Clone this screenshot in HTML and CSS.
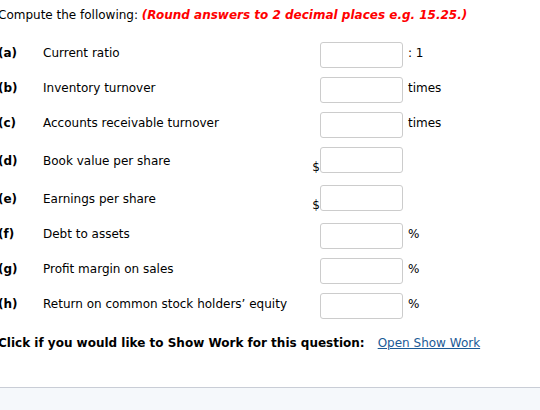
FILE: index.html
```html
<!DOCTYPE html>
<html>
<head>
<meta charset="utf-8">
<link rel="stylesheet" href="styles.css">
</head>
<body>
<div class="page">
  <p class="intro">Compute the following: <span class="note">(Round answers to 2 decimal places e.g. 15.25.)</span></p>
  <div class="rows">
    <div class="row"><span class="letter">(a)</span><span class="label">Current ratio</span><span class="prefix"></span><input class="field" type="text"><span class="unit">: 1</span></div>
    <div class="row"><span class="letter">(b)</span><span class="label">Inventory turnover</span><span class="prefix"></span><input class="field" type="text"><span class="unit">times</span></div>
    <div class="row"><span class="letter">(c)</span><span class="label">Accounts receivable turnover</span><span class="prefix"></span><input class="field" type="text"><span class="unit">times</span></div>
    <div class="row row-money"><span class="letter">(d)</span><span class="label">Book value per share</span><span class="prefix">$</span><input class="field" type="text"><span class="unit"></span></div>
    <div class="row row-money"><span class="letter">(e)</span><span class="label">Earnings per share</span><span class="prefix">$</span><input class="field" type="text"><span class="unit"></span></div>
    <div class="row"><span class="letter">(f)</span><span class="label">Debt to assets</span><span class="prefix"></span><input class="field" type="text"><span class="unit">%</span></div>
    <div class="row"><span class="letter">(g)</span><span class="label">Profit margin on sales</span><span class="prefix"></span><input class="field" type="text"><span class="unit">%</span></div>
    <div class="row"><span class="letter">(h)</span><span class="label">Return on common stock holders’ equity</span><span class="prefix"></span><input class="field" type="text"><span class="unit">%</span></div>
  </div>
  <p class="showwork"><span class="sw-text">Click if you would like to Show Work for this question:</span><a class="sw-link" href="#">Open Show Work</a></p>
</div>
<div class="footer"></div>
</body>
</html>
```
FILE: styles.css
```css
html, body {
  margin: 0;
  padding: 0;
  background: #ffffff;
  overflow: hidden;
}
body {
  font-family: "DejaVu Sans", Verdana, sans-serif;
  font-size: 12px;
  line-height: 16px;
  color: #000;
}
.page {
  margin-left: -2px;
}
.intro {
  margin: 7px 0 0 0;
  white-space: nowrap;
}
.note {
  color: #ff0000;
  font-weight: bold;
  font-style: italic;
}
.rows {
  margin-top: 19px;
  display: flex;
  flex-direction: column;
  gap: 9px;
}
.row {
  display: grid;
  grid-template-columns: 45px 267px 10px 83px 1fr;
  align-items: start;
  height: 26px;
}
.row-money {
  margin-bottom: 3px;
}
.letter {
  font-weight: bold;
  padding-top: 3px;
}
.label {
  padding-top: 3px;
  white-space: nowrap;
}
.row-money .letter,
.row-money .label {
  padding-top: 6px;
}
.prefix {
  align-self: end;
  text-align: right;
  line-height: 14px;
  margin-bottom: -1px;
}
.field {
  box-sizing: border-box;
  width: 83px;
  height: 26px;
  margin: 0;
  border: 1px solid #cccccc;
  border-radius: 3px;
  background: #fff;
  padding: 0 4px;
  font: inherit;
}
.unit {
  padding-top: 3px;
  padding-left: 5px;
  white-space: nowrap;
}
.showwork {
  margin: 16px 0 0 0;
  white-space: nowrap;
}
.sw-text {
  font-weight: bold;
}
.sw-link {
  margin-left: 13px;
  color: #1a5a96;
  text-decoration: underline;
}
.footer {
  margin-top: 36px;
  border-top: 1px solid #c9cdd6;
  background: #f5f8fb;
  height: 22px;
}
```
